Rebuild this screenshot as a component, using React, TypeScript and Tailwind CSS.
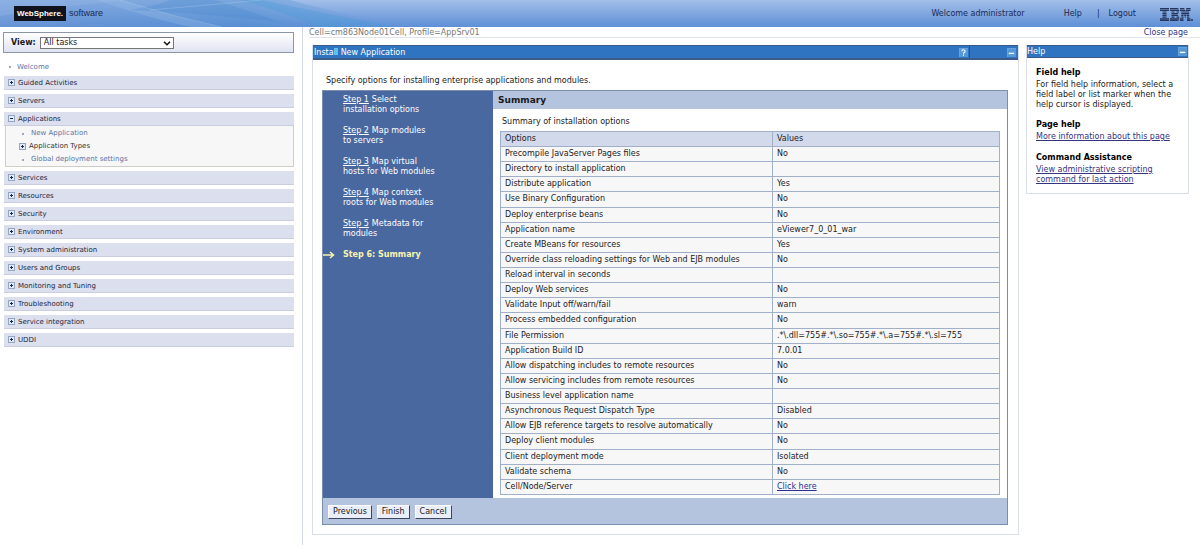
import React, { useState } from 'react'

type Task = { name: string; open?: boolean };

const tasks: Task[] = [
  { name: 'Guided Activities' },
  { name: 'Servers' },
  { name: 'Applications', open: true },
  { name: 'Services' },
  { name: 'Resources' },
  { name: 'Security' },
  { name: 'Environment' },
  { name: 'System administration' },
  { name: 'Users and Groups' },
  { name: 'Monitoring and Tuning' },
  { name: 'Troubleshooting' },
  { name: 'Service integration' },
  { name: 'UDDI' },
];

// step number, rest of the first line, second line
const steps = [
  ['Step 1', 'Select', 'installation options'],
  ['Step 2', 'Map modules', 'to servers'],
  ['Step 3', 'Map virtual', 'hosts for Web modules'],
  ['Step 4', 'Map context', 'roots for Web modules'],
  ['Step 5', 'Metadata for', 'modules'],
];

const options = [
  ['Precompile JavaServer Pages files', 'No'],
  ['Directory to install application', ''],
  ['Distribute application', 'Yes'],
  ['Use Binary Configuration', 'No'],
  ['Deploy enterprise beans', 'No'],
  ['Application name', 'eViewer7_0_01_war'],
  ['Create MBeans for resources', 'Yes'],
  ['Override class reloading settings for Web and EJB modules', 'No'],
  ['Reload interval in seconds', ''],
  ['Deploy Web services', 'No'],
  ['Validate Input off/warn/fail', 'warn'],
  ['Process embedded configuration', 'No'],
  ['File Permission', '.*\\.dll=755#.*\\.so=755#.*\\.a=755#.*\\.sl=755'],
  ['Application Build ID', '7.0.01'],
  ['Allow dispatching includes to remote resources', 'No'],
  ['Allow servicing includes from remote resources', 'No'],
  ['Business level application name', ''],
  ['Asynchronous Request Dispatch Type', 'Disabled'],
  ['Allow EJB reference targets to resolve automatically', 'No'],
  ['Deploy client modules', 'No'],
  ['Client deployment mode', 'Isolated'],
  ['Validate schema', 'No'],
];

function Toggle({ open }: { open?: boolean }) {
  return (
    <svg viewBox="0 0 7 7" className="size-[7px] shrink-0" shapeRendering="crispEdges">
      <rect width="7" height="7" fill="#93a5c2" />
      <rect x="1" y="1" width="5" height="5" fill="#e4ebf8" />
      <rect x="2" y="3" width="3" height="1" fill="#1c2a48" />
      {!open && <rect x="3" y="2" width="1" height="3" fill="#1c2a48" />}
    </svg>
  )
}

function TitleIcon({ children }: { children: React.ReactNode }) {
  return (
    <svg viewBox="0 0 10 10" className="size-[9px]">
      <rect width="10" height="10" fill="#5598d8" />
      <path d="M0 10V0H10" fill="none" stroke="#7db2e4" />
      {children}
    </svg>
  )
}

function IbmLogo() {
  return (
    <svg viewBox="0 0 33 13" className="w-[33px] h-[13px]" role="img" aria-label="IBM">
      <g fill="#26365c">
        <path d="M0 0h9v1.2H0zM0 1.7h9v1.2H0zM2.5 3.4h4v1.2h-4zM2.5 5.1h4v1.2h-4zM2.5 6.8h4v1.2h-4zM2.5 8.5h4v1.2h-4zM0 10.2h9v1.2H0zM0 11.8h9V13H0z" />
        <path d="M10 0h7q1.400 0 1.900 1.200H10zM10 1.700h9.200v1.200H10zM11.500 3.400h3v1.200h-3zM16.500 3.400h2.800l-.4 1.200h-2.400zM11.500 5.100h7l-1 1.200h-6zM11.500 6.800h6l1 1.200h-7zM11.500 8.500h3v1.200h-3zM16.500 8.500h2.500l.3 1.200h-2.800zM10 10.200h9.200v1.200H10zM10 11.800h8.800Q18.400 13 17 13h-7z" />
        <path d="M20 0h4.200l.4 1.200H20zM26.400 0h4.100v1.200H26zM20 1.700h4.800l.4 1.200H20zM25.800 1.700h4.700v1.200h-5.100zM21.300 3.400h7.900v1.200h-7.900zM21.300 5.100h7.900v1.200h-7.900zM21.300 6.800h2.200v1.200h-2.200zM24 6.800h2.600l-.3 1.200h-1.900zM27 6.800h2.200v1.200H27zM21.300 8.500h2.200v1.200h-2.200zM24.600 8.500h1.400l-.3 1.200h-.8zM27 8.500h2.200v1.200H27zM20 10.200h3.500v1.200H20zM27 10.200h3.500v1.200H27zM20 11.800h3.500V13H20zM27 11.800h3.500V13H27z" />
        <circle cx="32" cy="12" r="1" />
      </g>
    </svg>
  )
}

function Header() {
  return (
    <header className="relative flex h-[27px] items-center bg-linear-to-b from-[#a3bfe9] to-[#5e8fd6] pl-[14px] pr-[7px] text-[#1d2b52]">
      <svg viewBox="0 0 420 27" className="absolute left-0 top-0 h-full w-[420px]" aria-hidden="true">
        <defs>
          <linearGradient id="wash" x1="0" x2="1" y1="0" y2="0">
            <stop offset="0" stopColor="#6f97d6" />
            <stop offset="0.600" stopColor="#4f8ed0" />
            <stop offset="1" stopColor="#6c9bdb" stopOpacity="0" />
          </linearGradient>
        </defs>
        <path d="M0 0H290Q340 14 410 27H0z" fill="url(#wash)" opacity=".5" />
        <path d="M0 0H130Q70 5 0 16z" fill="#9dc0ea" opacity=".25" />
        <path d="M96 0H122Q170 16 222 27H190Q150 18 96 0z" fill="#a9c9ee" opacity=".25" />
        <path d="M130 10Q200 13 280 22Q240 8 215 0H170Q160 5 130 10z" fill="#3f85cb" opacity=".25" />
        <path d="M240 0Q290 14 318 27H400Q345 18 262 0z" fill="#439ad8" opacity=".3" />
        <path d="M120 0Q170 16 222 27M150 10Q220 4 262 0" fill="none" stroke="#b5d0f0" opacity=".3" />
      </svg>
      <div className="relative flex items-center gap-[3px] font-['Liberation_Sans',sans-serif] leading-[15px]">
        <span className="bg-[#10131c] px-[3px] text-[8px] font-bold text-white">WebSphere.</span>
        <span className="text-[9px]">software</span>
      </div>
      <nav className="ml-auto flex items-center pt-px text-[8px]">
        <span className="mr-[39px]">Welcome administrator</span>
        <a href="#help">Help</a>
        <span className="mx-[9px] pl-[6px]">|</span>
        <a href="#logout" className="mr-[24px]">Logout</a>
        <IbmLogo />
      </nav>
    </header>
  )
}

function Sidebar() {
  const [view, setView] = useState('All tasks');

  return (
    <aside className="w-[303px] shrink-0 border-r border-[#d5d9e2] pl-[3px] pr-[8px] pt-[5px]">
      <div className="flex h-[21px] items-center gap-[4px] border border-[#8b96a5] bg-linear-to-b from-white to-[#dfe3f2] pl-[7px]">
        <label htmlFor="view" className="text-[8px] font-bold">View:</label>
        <div className="relative">
          <select
            id="view"
            value={view}
            onChange={e => setView(e.target.value)}
            className="block h-[12px] w-[134px] appearance-none border border-[#767676] bg-white pl-[3px] text-[8px] leading-[10px]"
          >
            <option>All tasks</option>
          </select>
          <svg viewBox="0 0 8 5" className="pointer-events-none absolute right-[3px] top-[4px] h-[5px] w-[8px]">
            <path d="M1 .8L4 3.800L7 .8" fill="none" stroke="#111" strokeWidth="1.500" />
          </svg>
        </div>
      </div>
      <ul className="ml-px mt-[8px] text-[7px] leading-[12px]">
        <li className="mb-[3px] flex items-center gap-[6px] pl-[5px]">
          <span className="size-[2px] bg-[#9aa8c4]" />
          <a href="#welcome" className="text-[#5c73a5]">Welcome</a>
        </li>
        {tasks.map(task => (
          <li key={task.name} className="mb-[4px]">
            <button type="button" className="flex h-[14px] w-full items-center gap-[3px] border-b border-[#c9cddd] bg-[#dcdfee] pl-[4px] text-[#22263a]">
              <Toggle open={task.open} />
              {task.name}
            </button>
            {task.open && (
              <ul className="ml-px border border-t-0 border-[#cfcfc5] bg-[#f7f7f7] pt-px leading-[13px]">
                <li className="flex items-center gap-[7px] pl-[16px]">
                  <span className="size-[2px] bg-[#9aa8c4]" />
                  <a href="#new" className="text-[#5c73a5]">New Application</a>
                </li>
                <li className="flex items-center gap-[3px] pl-[13px]">
                  <Toggle />
                  <span className="text-[#33332a]">Application Types</span>
                </li>
                <li className="flex items-center gap-[7px] pl-[16px]">
                  <span className="size-[2px] bg-[#9aa8c4]" />
                  <a href="#global" className="text-[#5c73a5]">Global deployment settings</a>
                </li>
              </ul>
            )}
          </li>
        ))}
      </ul>
    </aside>
  )
}

function Wizard() {
  return (
    <div className="border border-[#7b8eae]">
      <div className="flex">
        <ol className="w-[170px] shrink-0 bg-[#4a68a0] pl-[20px] pt-[4px] text-[8px] leading-[10px] text-white">
          {steps.map(([step, first, second]) => (
            <li key={step} className="mb-[11px]">
              <div className="flex gap-[3px]">
                <a href="#step" className="underline">{step}</a>
                <span>{first}</span>
              </div>
              <div>{second}</div>
            </li>
          ))}
          <li className="relative font-bold text-[#f8f3b0]">
            <svg viewBox="0 0 12 8" className="absolute -left-[20px] top-px h-[8px] w-[12px]">
              <path d="M0 4H10M7 1L10.500 4L7 7" fill="none" stroke="#f8f3b0" strokeWidth="1.500" />
            </svg>
            Step 6: Summary
          </li>
        </ol>
        <section className="min-w-0 flex-1">
          <h2 className="bg-[#b4c3de] px-[5px] text-[9px] font-bold leading-[18px]">Summary</h2>
          <div className="px-[7px] pb-[3px] pt-[8px]">
            <table className="h-[364px] w-full border-collapse text-left text-[8px] leading-[10px] text-[#222]">
              <caption className="pb-[4px] pl-[2px] text-left">Summary of installation options</caption>
              <thead>
                <tr className="h-[15px] bg-[#d2d9ea]">
                  <th scope="col" className="w-[272px] border border-[#a0b0c9] px-[4px] py-0 font-normal">Options</th>
                  <th scope="col" className="border border-[#a0b0c9] px-[4px] py-0 font-normal">Values</th>
                </tr>
              </thead>
              <tbody className="bg-[#f7f7f8]">
                {options.map(([name, value]) => (
                  <tr key={name}>
                    <td className="border border-[#a0b0c9] px-[4px] py-0">{name}</td>
                    <td className="border border-[#a0b0c9] px-[4px] py-0">{value}</td>
                  </tr>
                ))}
                <tr>
                  <td className="border border-[#a0b0c9] px-[4px] py-0">Cell/Node/Server</td>
                  <td className="border border-[#a0b0c9] px-[4px] py-0">
                    <a href="#servers" className="text-[#2a2f8f] underline">Click here</a>
                  </td>
                </tr>
              </tbody>
            </table>
          </div>
        </section>
      </div>
      <div className="flex gap-[5px] bg-[#b4c3de] px-[5px] pb-[5px] pt-[7px] text-[8px] leading-[12px]">
        {['Previous', 'Finish', 'Cancel'].map(label => (
          <button key={label} type="button" className="border border-b-[#3a465e] border-l-white border-r-[#3a465e] border-t-white bg-[#eaeef8] px-[4px]">
            {label}
          </button>
        ))}
      </div>
    </div>
  )
}

function HelpPortlet() {
  return (
    <aside className="w-[163px] shrink-0 border border-t-0 border-[#d9dee8] pb-[8px]">
      <div className="flex h-[13px] items-center justify-between border-y border-[#3b5c88] bg-[#2f74c0] pr-px">
        <h2 className="text-[8px] text-white">Help</h2>
        <button type="button" aria-label="Minimize help">
          <TitleIcon><path d="M2 6H8" stroke="#fff" strokeWidth="1.500" /></TitleIcon>
        </button>
      </div>
      <div className="px-[9px] pt-[10px] text-[8px] leading-[10px] text-[#222]">
        <h3 className="mb-[2px] font-bold text-black">Field help</h3>
        <p>For field help information, select a field label or list marker when the help cursor is displayed.</p>
        <h3 className="mb-[2px] mt-[10px] font-bold text-black">Page help</h3>
        <a href="#info" className="block text-[#33337f] underline">More information about this page</a>
        <h3 className="mb-[2px] mt-[11px] font-bold text-black">Command Assistance</h3>
        <a href="#command" className="block text-[#33337f] underline">View administrative scripting command for last action</a>
      </div>
    </aside>
  )
}

export default function App() {
  return (
    <div className="flex min-h-screen flex-col bg-white font-['DejaVu_Sans',sans-serif] text-[#1a1a1a]">
      <Header />
      <div className="flex flex-1">
        <Sidebar />
        <div className="min-w-0 flex-1">
          <div className="ml-[6px] flex h-[11px] items-center justify-between border-b border-[#dfe3ea] pr-[12px] pt-px text-[8px] leading-[10px]">
            <span className="text-[#777]">Cell=cm863Node01Cell, Profile=AppSrv01</span>
            <a href="#close" className="text-[#33337f]">Close page</a>
          </div>
          <div className="flex items-start gap-[7px] pb-[10px] pl-[9px] pr-[11px] pt-[7px]">
            <main className="min-w-0 flex-1 border border-t-0 border-[#d9dee8]">
              <div className="flex h-[15px] items-stretch border-t border-b-2 border-[#3b5c88] bg-[#2f74c0]">
                <h1 className="flex-1 pl-px text-[8px] leading-[13px] text-white">Install New Application</h1>
                <button type="button" aria-label="Help" className="flex items-center border-r border-[#274f86] pr-px">
                  <TitleIcon><path d="M3.200 3.500Q3.200 2 5 2T6.800 3.500T5 5.600V6.300M5 7.300V8.500" fill="none" stroke="#fff" strokeWidth="1.200" /></TitleIcon>
                </button>
                <button type="button" aria-label="Minimize" className="flex w-[48px] items-center justify-end pr-[2px]">
                  <TitleIcon><path d="M2 6H8" stroke="#fff" strokeWidth="1.500" /></TitleIcon>
                </button>
              </div>
              <div className="pb-[9px] pl-[9px] pr-[10px] pt-[15px]">
                <p className="mb-[3px] pl-[4px] text-[8px] leading-[12px]">Specify options for installing enterprise applications and modules.</p>
                <Wizard />
              </div>
            </main>
            <HelpPortlet />
          </div>
        </div>
      </div>
    </div>
  )
}
